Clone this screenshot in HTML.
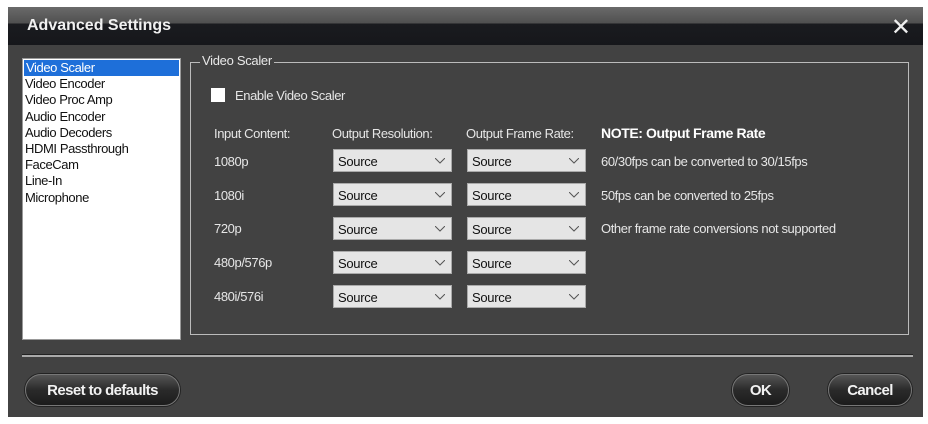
<!DOCTYPE html>
<html><head><style>
body{margin:0;width:928px;height:424px;background:#fff;position:relative;overflow:hidden;font-family:"Liberation Sans",sans-serif}
.dlg{position:absolute;left:8px;top:7px;width:915px;height:410px;background:#424242}
.tb{position:absolute;left:0;top:0;width:100%;height:38px;background:linear-gradient(#6a6a6a 0,#505050 16px,#1a1b1f 17px,#16171b 38px)}
.title{position:absolute;left:19px;top:10px;color:#f0f0f0;font-weight:bold;font-size:16px}
.x{position:absolute;right:12px;top:6px;color:#eee;font-size:24px}
.list{position:absolute;left:14px;top:51px;width:157px;height:280px;background:#fff;border:1px solid #999;font-size:13px;line-height:16.2px;color:#111;letter-spacing:-0.4px}
.list div{padding-left:2px}
.sel{background:#1e6fd9;color:#fff;margin:1px 1px 0 1px}
.grp{position:absolute;left:182px;top:55px;width:717px;height:271px;border:1px solid #bbb}
.gl{position:absolute;left:192px;top:46px;background:#424242;color:#e8e8e8;font-size:13px;padding:0 2px;letter-spacing:-0.3px}
.t{position:absolute;color:#e6e6e6;font-size:13px;letter-spacing:-0.4px;white-space:nowrap}
.cb{position:absolute;left:211px;top:88px;width:14px;height:14px;background:#fff}
.sl{position:absolute;width:119px;height:23px;background:#e5e5e5;border:1px solid #aaa;font-size:13px;color:#111;letter-spacing:-0.3px;box-sizing:border-box;padding:4px 0 0 4px}
.sl svg{position:absolute;right:6px;top:8px}
.sep{position:absolute;left:14px;top:347px;width:891px;height:2px;background:#aaa;border-top:1px solid #222}
.btn{position:absolute;top:367px;height:32px;border-radius:16px;background:linear-gradient(#555,#2a2a2a 50%,#1c1c1c);border:1px solid #777;color:#f2f2f2;font-size:15px;font-weight:bold;text-align:center;line-height:31px;box-sizing:border-box;box-shadow:0 0 0 1px #222;letter-spacing:-0.6px}
</style></head><body>
<div class="dlg">
<div class="tb"><div class="title">Advanced Settings</div><div class="x">✕</div></div>
<div class="list">
<div class="sel">Video Scaler</div><div>Video Encoder</div><div>Video Proc Amp</div><div>Audio Encoder</div><div>Audio Decoders</div><div>HDMI Passthrough</div><div>FaceCam</div><div>Line-In</div><div>Microphone</div>
</div>
<div class="grp"></div>
<div class="gl">Video Scaler</div>
<div class="sep"></div>
<div class="btn" style="left:17px;width:155px">Reset to defaults</div>
<div class="btn" style="left:724px;width:57px">OK</div>
<div class="btn" style="left:820px;width:84px">Cancel</div>
</div>
<div class="cb"></div>
<div class="t" style="left:235px;top:88px">Enable Video Scaler</div>
<div class="t" style="left:214px;top:126px">Input Content:</div>
<div class="t" style="left:332px;top:126px">Output Resolution:</div>
<div class="t" style="left:466px;top:126px">Output Frame Rate:</div>
<div class="t" style="left:601px;top:125px;font-weight:bold;color:#fff;font-size:14px">NOTE: Output Frame Rate</div>
<div class="t" style="left:601px;top:154px">60/30fps can be converted to 30/15fps</div>
<div class="t" style="left:601px;top:188px">50fps can be converted to 25fps</div>
<div class="t" style="left:601px;top:221px">Other frame rate conversions not supported</div>
<div class="t" style="left:214px;top:154px">1080p</div>
<div class="t" style="left:214px;top:188px">1080i</div>
<div class="t" style="left:214px;top:221px">720p</div>
<div class="t" style="left:214px;top:255px">480p/576p</div>
<div class="t" style="left:214px;top:289px">480i/576i</div>
<div class="sl" style="left:333px;top:149px">Source<svg width="10" height="6"><path d="M0 0L5 5L10 0" stroke="#555" fill="none"/></svg></div>
<div class="sl" style="left:467px;top:149px">Source<svg width="10" height="6"><path d="M0 0L5 5L10 0" stroke="#555" fill="none"/></svg></div>
<div class="sl" style="left:333px;top:183px">Source<svg width="10" height="6"><path d="M0 0L5 5L10 0" stroke="#555" fill="none"/></svg></div>
<div class="sl" style="left:467px;top:183px">Source<svg width="10" height="6"><path d="M0 0L5 5L10 0" stroke="#555" fill="none"/></svg></div>
<div class="sl" style="left:333px;top:217px">Source<svg width="10" height="6"><path d="M0 0L5 5L10 0" stroke="#555" fill="none"/></svg></div>
<div class="sl" style="left:467px;top:217px">Source<svg width="10" height="6"><path d="M0 0L5 5L10 0" stroke="#555" fill="none"/></svg></div>
<div class="sl" style="left:333px;top:251px">Source<svg width="10" height="6"><path d="M0 0L5 5L10 0" stroke="#555" fill="none"/></svg></div>
<div class="sl" style="left:467px;top:251px">Source<svg width="10" height="6"><path d="M0 0L5 5L10 0" stroke="#555" fill="none"/></svg></div>
<div class="sl" style="left:333px;top:285px">Source<svg width="10" height="6"><path d="M0 0L5 5L10 0" stroke="#555" fill="none"/></svg></div>
<div class="sl" style="left:467px;top:285px">Source<svg width="10" height="6"><path d="M0 0L5 5L10 0" stroke="#555" fill="none"/></svg></div>
</body></html>
